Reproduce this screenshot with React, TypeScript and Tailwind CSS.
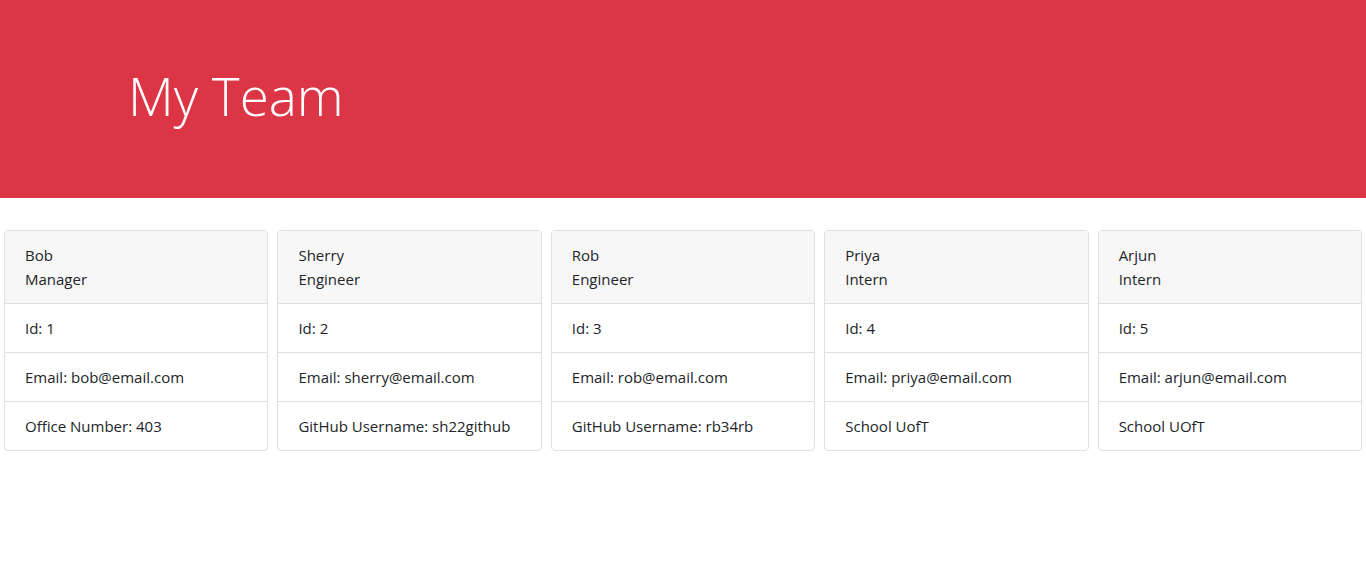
const team = [
  { name: "Bob", role: "Manager", id: 1, email: "bob@email.com", extra: "Office Number: 403" },
  { name: "Sherry", role: "Engineer", id: 2, email: "sherry@email.com", extra: "GitHub Username: sh22github" },
  { name: "Rob", role: "Engineer", id: 3, email: "rob@email.com", extra: "GitHub Username: rb34rb" },
  { name: "Priya", role: "Intern", id: 4, email: "priya@email.com", extra: "School UofT" },
  { name: "Arjun", role: "Intern", id: 5, email: "arjun@email.com", extra: "School UOfT" },
];

export default function App() {
  return (
    <div className="min-h-[566px] bg-white text-[#212529] font-['Open_Sans',sans-serif]">
      <header className="h-[198px] bg-[#dc3545] pt-[64px] pl-32">
        <h1 className="text-[53px] leading-[64px] font-light text-white">My Team</h1>
      </header>

      <main className="flex gap-[9px] px-1 mt-8">
        {team.map((m) => (
          <div key={m.id} className="flex-1 rounded border border-[#dfdfdf] overflow-hidden text-[15px] leading-6">
            <div className="bg-[#f7f7f7] px-5 py-3 border-b border-[#dfdfdf]">
              <div>{m.name}</div>
              <div>{m.role}</div>
            </div>
            <ul>
              <li className="px-5 py-3 border-b border-[#dfdfdf]">Id: {m.id}</li>
              <li className="px-5 py-3 border-b border-[#dfdfdf]">Email: {m.email}</li>
              <li className="px-5 py-3 whitespace-nowrap">{m.extra}</li>
            </ul>
          </div>
        ))}
      </main>
    </div>
  );
}
